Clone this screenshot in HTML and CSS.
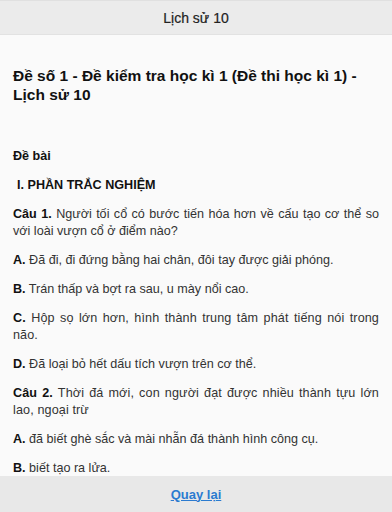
FILE: index.html
```html
<!DOCTYPE html>
<html lang="vi">
<head>
<meta charset="utf-8">
<title>Lịch sử 10</title>
<link rel="stylesheet" href="styles.css">
</head>
<body>
<div class="app">
  <header class="topbar">Lịch sử 10</header>
  <main class="content">
    <h1 class="title">Đề số 1 - Đề kiểm tra học kì 1 (Đề thi học kì 1) - Lịch sử 10</h1>
    <p class="heading">Đề bài</p>
    <p class="heading section">I. PHẦN TRẮC NGHIỆM</p>
    <p><b>Câu 1.</b> Người tối cổ có bước tiến hóa hơn về cấu tạo cơ thể so với loài vượn cổ ở điểm nào?</p>
    <p><b>A.</b> Đã đi, đi đứng bằng hai chân, đôi tay được giải phóng.</p>
    <p><b>B.</b> Trán thấp và bợt ra sau, u mày nổi cao.</p>
    <p class="wide"><b>C.</b> Hộp sọ lớn hơn, hình thành trung tâm phát tiếng nói trong não.</p>
    <p><b>D.</b> Đã loại bỏ hết dấu tích vượn trên cơ thể.</p>
    <p class="wide"><b>Câu 2.</b> Thời đá mới, con người đạt được nhiều thành tựu lớn lao, ngoại trừ</p>
    <p><b>A.</b> đã biết ghè sắc và mài nhẵn đá thành hình công cụ.</p>
    <p><b>B.</b> biết tạo ra lửa.</p>
  </main>
  <footer class="bottombar"><a href="#" class="back">Quay lại</a></footer>
</div>
</body>
</html>
```
FILE: styles.css
```css
* { box-sizing: border-box; }
html, body {
  margin: 0;
  padding: 0;
  height: 100%;
}
body {
  background: #fafafa;
  font-family: Arial, "Liberation Sans", sans-serif;
  color: #333;
}
.app {
  display: flex;
  flex-direction: column;
  height: 100vh;
  overflow: hidden;
}
.topbar {
  flex: 0 0 35px;
  display: flex;
  align-items: center;
  justify-content: center;
  background: #ebebeb;
  border-top: 1px solid #e0e0e0;
  border-bottom: 1px solid #e2e2e2;
  font-size: 14px;
  color: #222;
  -webkit-text-stroke: 0.2px #222;
}
.content {
  flex: 1;
  overflow: hidden;
  padding: 0 13px;
}
.title {
  margin: 31px 0 44px;
  font-size: 15.5px;
  line-height: 19px;
  font-weight: bold;
  color: #111;
}
.content p {
  margin: 0 0 12px;
  font-size: 12.6px;
  line-height: 17px;
  text-align: justify;
}
.content p.wide {
  letter-spacing: 0.12px;
}
.content p b,
.heading {
  color: #111;
  font-weight: bold;
}
.section {
  padding-left: 4px;
}
.bottombar {
  flex: 0 0 36px;
  display: flex;
  align-items: center;
  justify-content: center;
  background: #e8e8e8;
}
.back {
  color: #2b7bd0;
  font-size: 13px;
  font-weight: bold;
  text-decoration: underline;
}
```
